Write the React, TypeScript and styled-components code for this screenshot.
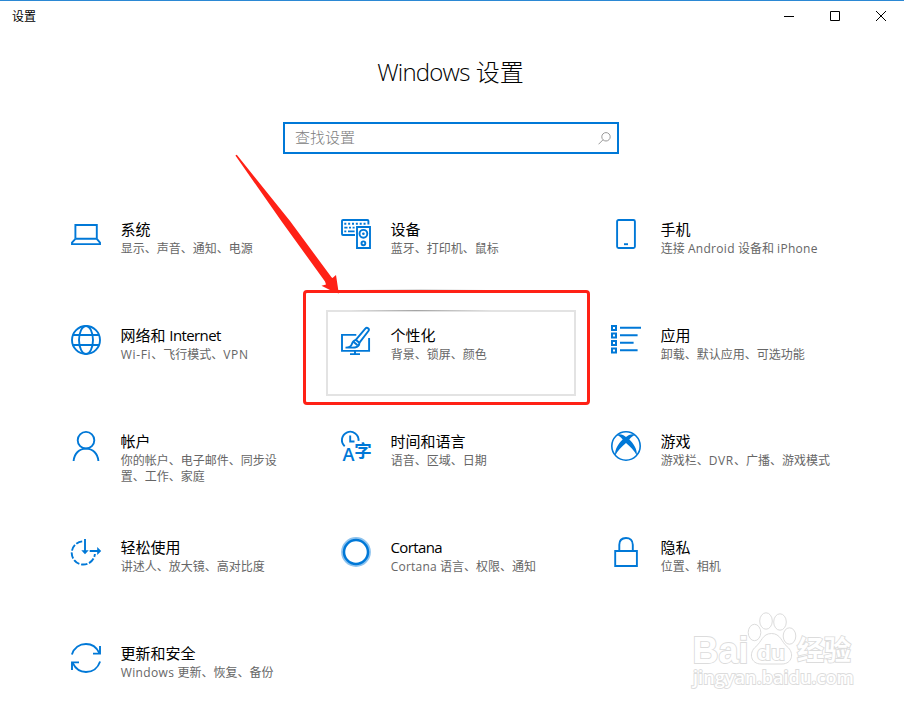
import React from "react";
import styled, { createGlobalStyle } from "styled-components";

const BLUE = "#0078d7";

const GlobalStyle = createGlobalStyle`
  * { box-sizing: border-box; }
  html, body { margin: 0; padding: 0; background: #fff; overflow: hidden; }
  button, input { font: inherit; }
`;

const Window = styled.main`
  position: relative;
  width: 904px;
  height: 709px;
  overflow: hidden;
  display: flex;
  flex-direction: column;
  background: #fff;
  color: #000;
  border-top: 1px solid #2b88d4;
  font-family: "Open Sans", "Noto Sans CJK SC", sans-serif;
`;

const TitleBar = styled.header`
  flex: none;
  display: flex;
  justify-content: space-between;
  height: 31px;
  padding-left: 12px;
`;

const WindowTitle = styled.span`
  font-size: 12px;
  line-height: 31px;
`;

const Controls = styled.div`
  display: flex;
`;

const ControlButton = styled.button`
  display: flex;
  align-items: center;
  justify-content: center;
  width: 46px;
  height: 30px;
  padding: 0;
  border: 0;
  background: none;
`;

const Heading = styled.h1`
  flex: none;
  margin: 21px 0 1px;
  padding-right: 3px;
  height: 38px;
  line-height: 38px;
  text-align: center;
  font-size: 24px;
  font-weight: 300;
`;

const SearchBox = styled.label`
  flex: none;
  display: flex;
  align-items: center;
  justify-content: space-between;
  width: 336px;
  height: 32px;
  margin: 30px 0 0 283px;
  padding: 0 6px 0 10px;
  border: 2px solid ${BLUE};
`;

const SearchInput = styled.input`
  flex: 1;
  min-width: 0;
  height: 26px;
  padding: 0 0 2px;
  border: 0;
  outline: 0;
  background: none;
  font-size: 15px;
  font-weight: 300;
  &::placeholder { color: #7c7c7c; opacity: 1; }
`;

const Grid = styled.section`
  flex: none;
  display: grid;
  grid-template-columns: repeat(3, 250px);
  grid-auto-rows: 86px;
  gap: 20px;
  margin: 50px 0 0 56px;
`;

const Tile = styled.a<{ $active?: boolean }>`
  display: flex;
  gap: 19px;
  padding: 13px;
  border: 2px solid transparent;
  ${(p) =>
    p.$active &&
    `background:
       linear-gradient(#fff, #fff) padding-box,
       linear-gradient(90deg, #e3e3e3 10%, #a4a4a4 36%, #e3e3e3 66%) top / 100% 1px no-repeat border-box,
       linear-gradient(#e3e3e3, #e3e3e3) border-box;`}
`;

const IconBox = styled.span`
  flex: none;
  width: 30px;
  height: 30px;
  svg { display: block; overflow: visible; }
`;

const TileText = styled.div`
  flex: 1;
  min-width: 0;
`;

const TileTitle = styled.div`
  height: 20px;
  line-height: 20px;
  padding-left: 0.4px;
  font-size: 15px;
  white-space: nowrap;
`;

const TileNote = styled.div`
  margin-top: 2px;
  padding-left: 0.8px;
  line-height: 16px;
  font-size: 12px;
  color: #666;
  white-space: pre;
`;

const Latin = styled.span<{ $track: number }>`
  letter-spacing: ${(p) => p.$track}px;
`;

const HighlightFrame = styled.div`
  position: absolute;
  left: 303px;
  top: 289px;
  width: 287px;
  height: 115px;
  border: 3px solid #ff2116;
  border-radius: 4px;
  &::before {
    content: "";
    position: absolute;
    left: 50px;
    top: -4px;
    width: 130px;
    height: 1px;
    background: linear-gradient(90deg, #fff, #dcdcdc, #fff);
  }
`;

const Arrow = styled.svg`
  position: absolute;
  left: 230px;
  top: 149px;
`;

const Watermark = styled.svg`
  position: absolute;
  left: 680px;
  top: 599px;
  text { paint-order: stroke; stroke-width: 1.8px; }
`;

const Icon = ({ children }: { children: React.ReactNode }) => (
  <svg width="30" height="30" viewBox="0 0 30 30" fill="none" stroke={BLUE} strokeWidth="1.9">
    {children}
  </svg>
);

const icons: Record<string, React.ReactNode> = {
  system: (
    <Icon>
      <path d="M4.4 19.5V6h21.4v13.5M4.4 19.8h21.4M4.4 19.8 1 23.6v1.5h28v-1.5l-3.2-3.8" />
    </Icon>
  ),
  devices: (
    <Icon>
      <path d="M14 16H2a1 1 0 0 1-1-1V2a1 1 0 0 1 1-1h24.4a1 1 0 0 1 1 1v3.6" />
      <path strokeWidth="2" strokeDasharray="2 1.85" d="M3.3 4.8h23" />
      <path d="M3.3 8.6h3.2M8 8.6h2M11.6 8.6h2M3.3 12.4h2M7 12.4h6.6" />
      <path d="M16 8h13v21H16z" />
      <circle cx="22.4" cy="14.8" r="3.9" />
      <circle cx="22.4" cy="14.8" r="1.3" fill={BLUE} stroke="none" />
      <circle cx="22.4" cy="24.3" r="1.9" />
    </Icon>
  ),
  phone: (
    <Icon>
      <rect x="6.1" y="1" width="17.8" height="28" rx="1.5" />
      <path d="M13 25.2h4" />
    </Icon>
  ),
  network: (
    <Icon>
      <circle cx="15" cy="15" r="14" />
      <ellipse cx="15" cy="15" rx="7" ry="14" />
      <path d="M2 10h26M2 20h26" />
    </Icon>
  ),
  personalize: (
    <Icon>
      <path d="M15.3 9.9H1v16h27.1V13M14 26v3M9 29.1h10" />
      <path d="M14.8 14 24.3 2.8c1.8-1.9 4.6.2 3.1 2.4L18.3 17" transform="translate(0 .8)" />
      <path d="M14.8 14.8l3.5 3c.3 4-3.8 5-8.300 4.800H4.500c3.500 0 5.700-1.100 6.500-3.900.5-1.900 1.900-3.300 3.800-3.900z" />
      <path d="M12.5 16.800l4 3.500" />
    </Icon>
  ),
  apps: (
    <Icon>
      {[0, 7.5, 15, 22.5].map((y) => (
        <rect key={y} x="1" y={y + 1} width="4" height="4" strokeWidth="2" />
      ))}
      <path d="M9 2.8h21M9 10.3h17.6M9 17.8h13.6M9 25.3h17.6" />
    </Icon>
  ),
  account: (
    <Icon>
      <circle cx="15" cy="9.2" r="8.3" />
      <path d="M2.6 30c.6-7.5 5.7-12.4 12.4-12.4S26.8 22.5 27.4 30" />
    </Icon>
  ),
  time: (
    <Icon>
      <path d="M3.7 15.2A8.3 8.3 0 1 1 17.5 9.8M9.2 4.5v6h4.3" />
      <text x="1.5" y="30" fontSize="18" fontWeight="600" fontFamily="Open Sans, sans-serif" fill={BLUE} stroke="none" textLength="12" lengthAdjust="spacingAndGlyphs">A</text>
      <text x="13.3" y="26.3" fontSize="17.5" fontWeight="700" fontFamily="Noto Sans CJK SC, sans-serif" fill={BLUE} stroke="none">字</text>
    </Icon>
  ),
  gaming: (
    <Icon>
      <circle cx="15" cy="15" r="14.2" strokeWidth="1.6" />
      <path fill={BLUE} stroke="none" d="M5 4.3C8.5 2 12.5 4 15 5.9 17.5 4 21.5 2 25 4.3 22.5 4 20.5 6 18.3 8.4 22.5 12.5 26.5 18 25.8 24.5 23.5 19.8 19 15.5 15 12 11 15.5 6.5 19.8 4.2 24.5 3.5 18 7.5 12.5 11.7 8.4 9.5 6 7.5 4 5 4.3z" />
    </Icon>
  ),
  ease: (
    <Icon>
      <path d="M11.2 4.4A11.6 11.6 0 1 0 23.9 17" strokeDasharray="6.4 1.8" />
      <path d="M14 2v12M18.7 14h9" />
      <path fill={BLUE} stroke="none" d="M10.3 13.2h7.4L14 17.3zM26.2 10v8l4-4z" />
    </Icon>
  ),
  cortana: (
    <Icon>
      <circle cx="15" cy="15" r="13.8" stroke="#8ec3ee" strokeWidth="2.2" />
      <circle cx="15" cy="15" r="12" strokeWidth="2.5" />
    </Icon>
  ),
  privacy: (
    <Icon>
      <path d="M4.2 14h21.7v15H4.2z" />
      <path d="M8.3 13.5V7.8C8.3 3.5 11 1 15 1s6.8 2.5 6.8 6.8v5.7" />
    </Icon>
  ),
  update: (
    <Icon>
      <path d="M.9 11.5C3 5 8.5 1 15 1c6 0 10.5 3.2 13.2 8.8M29.1 18.5C27 25 21.5 29 15 29 9 29 4.5 25.8 1.8 20.2" />
      <path d="M29 3v7.6h-7M1 27v-7.6h7" />
    </Icon>
  ),
};

interface Category {
  icon: string;
  title: string;
  note: string;
  active?: boolean;
  noteTrack?: number;
}

const categories: Category[] = [
  { icon: "system", title: "系统", note: "显示、声音、通知、电源" },
  { icon: "devices", title: "设备", note: "蓝牙、打印机、鼠标" },
  { icon: "phone", title: "手机", note: "连接 Android 设备和 iPhone", noteTrack: 0.3 },
  { icon: "network", title: "网络和 Internet", note: "Wi-Fi、飞行模式、VPN", noteTrack: 0.65 },
  { icon: "personalize", title: "个性化", note: "背景、锁屏、颜色", active: true },
  { icon: "apps", title: "应用", note: "卸载、默认应用、可选功能" },
  { icon: "account", title: "帐户", note: "你的帐户、电子邮件、同步设\n置、工作、家庭" },
  { icon: "time", title: "时间和语言", note: "语音、区域、日期" },
  { icon: "gaming", title: "游戏", note: "游戏栏、DVR、广播、游戏模式", noteTrack: 0.6 },
  { icon: "ease", title: "轻松使用", note: "讲述人、放大镜、高对比度" },
  { icon: "cortana", title: "Cortana", note: "Cortana 语言、权限、通知", noteTrack: 0.2 },
  { icon: "privacy", title: "隐私", note: "位置、相机" },
  { icon: "update", title: "更新和安全", note: "Windows 更新、恢复、备份", noteTrack: 0.35 },
];

/** Spaces the Latin words of a mixed-script string, leaving Chinese untouched. */
const Mixed = ({ text, track }: { text: string; track: number }) => (
  <>
    {text.split(/([A-Za-z-]+)/).map((run, i) =>
      i % 2 ? <Latin key={i} $track={track}>{run}</Latin> : run
    )}
  </>
);

export default function App() {
  return (
    <>
      <GlobalStyle />
      <Window>
        <TitleBar>
          <WindowTitle>设置</WindowTitle>
          <Controls>
            <ControlButton aria-label="最小化">
              <svg width="10" height="10" stroke="#000"><path d="M0 5.5h10" /></svg>
            </ControlButton>
            <ControlButton aria-label="最大化">
              <svg width="10" height="10" stroke="#000" fill="none"><path d="M.5.5h9v9h-9z" /></svg>
            </ControlButton>
            <ControlButton aria-label="关闭">
              <svg width="10" height="10" stroke="#000"><path d="m0 0 10 10M10 0 0 10" /></svg>
            </ControlButton>
          </Controls>
        </TitleBar>
        <Heading><Mixed text="Windows 设置" track={-0.8} /></Heading>
        <SearchBox>
          <SearchInput placeholder="查找设置" />
          <svg width="13" height="13" viewBox="0 0 13 13" fill="none" stroke="#999">
            <circle cx="8" cy="4.8" r="4.2" />
            <path d="M4.9 7.9.5 12.3" />
          </svg>
        </SearchBox>
        <Grid>
          {categories.map((c) => (
            <Tile key={c.icon} $active={c.active}>
              <IconBox>{icons[c.icon]}</IconBox>
              <TileText>
                <TileTitle><Mixed text={c.title} track={-0.6} /></TileTitle>
                <TileNote><Mixed text={c.note} track={c.noteTrack ?? 0} /></TileNote>
              </TileText>
            </Tile>
          ))}
        </Grid>
        <HighlightFrame />
        <Arrow width="120" height="150" fill="#ff2116">
          <path d="M5.4 5.6 6.800 4.800 60 71 101.500 127.300 102.500 128 106 125 108.800 143.500 102 141 91.500 135.700 96 134.500 95 131.500 52 72z" />
        </Arrow>
        <Watermark width="200" height="109" viewBox="0 0 200 109" fill="#fff" stroke="#dcdcdc" strokeWidth="1">
          <ellipse cx="74.500" cy="32.500" rx="6.300" ry="8.200" />
          <ellipse cx="86" cy="21" rx="6.300" ry="8.200" />
          <ellipse cx="100" cy="22" rx="6.300" ry="8.200" />
          <ellipse cx="109.500" cy="36" rx="6.300" ry="8.200" />
          <path d="M91.500 33.500c-9 0-10 8.500-15.500 13-8 6.500-5 17.500 5 17.500h21c10 0 13-11 5-17.500-5.500-4.500-6.500-13-15.500-13z" />
          <text x="12.500" y="62.500" fontFamily="Liberation Sans, sans-serif" fontWeight="700" fontSize="36" textLength="56" lengthAdjust="spacingAndGlyphs">Bai</text>
          <text x="77" y="60" fontFamily="Liberation Sans, sans-serif" fontWeight="700" fontSize="21" textLength="28" lengthAdjust="spacingAndGlyphs">du</text>
          <text x="117" y="60" fontFamily="Noto Sans CJK SC, sans-serif" fontWeight="700" fontSize="27">经验</text>
          <text x="13" y="84" fontFamily="Open Sans, sans-serif" fontWeight="600" fontSize="18" textLength="161" lengthAdjust="spacingAndGlyphs">jingyan.baidu.com</text>
        </Watermark>
      </Window>
    </>
  );
}
